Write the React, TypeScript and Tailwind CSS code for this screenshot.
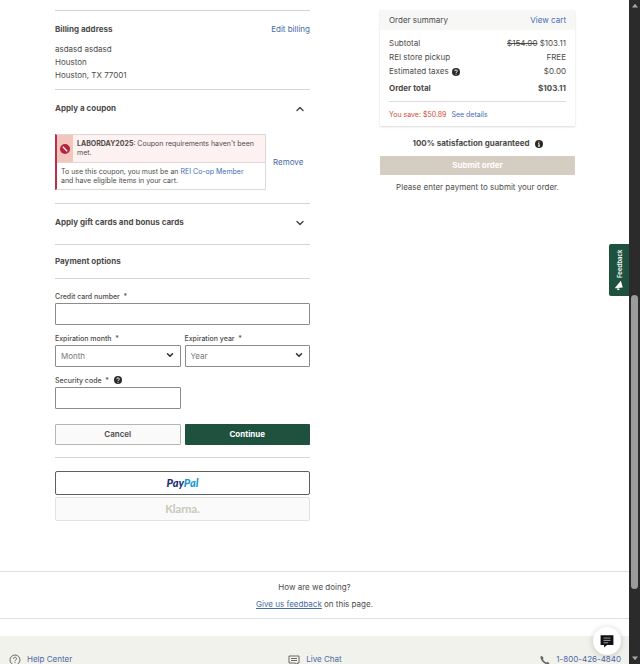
import { useState } from "react"
import type { ReactNode } from "react"
import { ChevronDown, ChevronUp } from "lucide-react"

const years = ["2025", "2026", "2027", "2028", "2029", "2030"]
const months = ["01", "02", "03", "04", "05", "06", "07", "08", "09", "10", "11", "12"]

const BadgeIcon = ({ sign }: { sign: "?" | "i" }) => (
  <svg viewBox="0 0 16 16" className="size-2 shrink-0" fill="none" stroke="#fff" strokeWidth="2">
    <circle cx="8" cy="8" r="8" fill="#2b2a28" stroke="none" />
    {sign === "?" ? <path d="M5.5 6.3a2.5 2.5 0 1 1 3.6 2.2c-.8.4-1.1.7-1.1 1.5M8 11.6v1.8" /> : <path d="M8 3v2M6.3 7.3H8v4.5M6 12.2h4" />}
  </svg>
)

const Field = ({ id, label, help, children }: { id: string, label: string, help?: boolean, children: ReactNode }) => (
  <div>
    <div className="flex items-center gap-[5px] h-3 mb-px">
      <label htmlFor={id} className="text-[7px] font-medium">{label} &nbsp;*</label>
      {help && <button type="button" aria-label="About the security code"><BadgeIcon sign="?" /></button>}
    </div>
    {children}
  </div>
)

const Select = ({ id, placeholder, options }: { id: string, placeholder: string, options: Array<string> }) => (
  <div className="relative">
    <select id={id} className="block w-full h-[22px] px-[5px] pt-px appearance-none bg-white border border-[#8b8b89] rounded-[1px] text-[#777]">
      <option value="">{placeholder}</option>
      {options.map((o) => <option key={o} value={o}>{o}</option>)}
    </select>
    <ChevronDown className="absolute right-1.5 top-[5px] size-2.5 text-[#2b2a28] pointer-events-none" strokeWidth={3.5} />
  </div>
)

const Payment = () => {
  const [couponOpen, setCouponOpen] = useState(true)

  return (
    <div>
      {/* Billing */}
      <section className="border-t border-[#d4d4d2] pt-3 pb-[7px]">
        <div className="flex justify-between">
          <h2 className="font-bold">Billing address</h2>
          <a href="#billing" className="text-[#456ca6]">Edit billing</a>
        </div>
        <address className="not-italic mt-[7px]">
          asdasd asdasd<br />Houston<br />Houston, TX 77001
        </address>
      </section>

      {/* Coupon */}
      <section className="border-t border-[#d4d4d2] pt-3 pb-[13px]">
        <h2 className="font-bold">
          <button type="button" className="flex w-full items-center justify-between pr-1" onClick={() => setCouponOpen(!couponOpen)}>
            Apply a coupon
            {couponOpen ? <ChevronUp className="size-3" strokeWidth={3} /> : <ChevronDown className="size-3" strokeWidth={3} />}
          </button>
        </h2>
        {couponOpen && (
          <div className="flex items-center gap-[7px] mt-[19px]">
            <div className="w-[211px] border border-[#dcd8d6] border-l-2 border-l-[#b5324a] text-[7px] leading-[9px]">
              <div className="flex bg-[#fdf1f1] border-b border-[#e6d5d4]">
                <div className="flex items-center justify-center w-4 shrink-0 bg-[#f2c6be]">
                  <svg viewBox="0 0 16 16" className="size-2.5">
                    <circle cx="8" cy="8" r="8" fill="#b5243c" />
                    <path d="M4.5 4.5l7 7" stroke="#fff" strokeWidth="2" />
                  </svg>
                </div>
                <p className="p-1 pb-[5px] whitespace-nowrap"><b className="font-bold">LABORDAY2025</b>: Coupon requirements haven't been<br />met.</p>
              </div>
              <p className="p-1 whitespace-nowrap">
                To use this coupon, you must be an <a href="#member" className="text-[#3f6db5]">REI Co-op Member</a><br />and have eligible items in your cart.
              </p>
            </div>
            <button type="button" className="text-[#456ca6]">Remove</button>
          </div>
        )}
      </section>

      {/* Gift cards */}
      <section className="border-t border-[#d4d4d2] pt-3 pb-[15px]">
        <h2 className="font-bold">
          <button type="button" className="flex w-full items-center justify-between pr-1">
            Apply gift cards and bonus cards
            <ChevronDown className="size-3" strokeWidth={3} />
          </button>
        </h2>
      </section>

      {/* Payment */}
      <section className="border-t border-[#d4d4d2]">
        <h2 className="font-bold py-2.5 border-b border-[#d4d4d2]">Payment options</h2>
        <form className="pt-[11px] grid gap-[7px]" onSubmit={(e) => e.preventDefault()}>
          <Field id="card" label="Credit card number">
            <input id="card" type="text" className="block w-full h-[22px] px-[5px] border border-[#8b8b89] rounded-[1px]" />
          </Field>
          <div className="grid grid-cols-2 gap-1">
            <Field id="month" label="Expiration month">
              <Select id="month" placeholder="Month" options={months} />
            </Field>
            <Field id="year" label="Expiration year">
              <Select id="year" placeholder="Year" options={years} />
            </Field>
          </div>
          <div className="grid grid-cols-2 gap-1">
            <Field id="code" label="Security code" help>
              <input id="code" type="text" className="block w-full h-[22px] px-[5px] border border-[#8b8b89] rounded-[1px]" />
            </Field>
          </div>
          <div className="grid grid-cols-2 gap-1 mt-2">
            <button type="button" className="h-[21px] border border-[#b5b5b2] rounded-[1px] bg-[#fafafa] font-semibold">Cancel</button>
            <button type="submit" className="h-[21px] rounded-[1px] bg-[#1f513f] text-white font-bold">Continue</button>
          </div>
        </form>

        <div className="grid gap-0.5 mt-3 pt-[13px] border-t border-[#d4d4d2] font-[Lato,sans-serif] text-[11px] font-black">
          <button type="button" className="h-6 pb-0.5 border border-[#5f5f5d] rounded-[2px] italic text-[#1c2f78]">Pay<span className="text-[#1a98d5]">Pal</span></button>
          <button type="button" disabled className="h-6 pb-0.5 border border-[#e2e2df] rounded-[2px] bg-[#fafafa] text-[#cccabb]">Klarna.</button>
        </div>
      </section>
    </div>
  )
}

const Summary = () => (
  <aside className="text-center">
    <div className="text-left shadow-[0_1px_2px_#00000026]">
      <div className="flex items-center justify-between h-5 px-[9px] bg-[#f7f7f6]">
        <h2>Order summary</h2>
        <a href="#cart" className="text-[#3f6db5]">View cart</a>
      </div>
      <div className="px-[9px] pt-[7px] pb-[5px]">
        <dl className="grid grid-cols-[1fr_auto] gap-y-px">
          <dt>Subtotal</dt>
          <dd className="text-right"><s>$154.00</s> $103.11</dd>
          <dt>REI store pickup</dt>
          <dd className="text-right">FREE</dd>
          <dt className="flex items-center gap-[3px]">Estimated taxes <BadgeIcon sign="?" /></dt>
          <dd className="text-right">$0.00</dd>
          <dt className="pt-[3px] font-bold">Order total</dt>
          <dd className="pt-[3px] text-right font-bold">$103.11</dd>
        </dl>
        <p className="flex gap-[5px] mt-1.5 pt-1.5 border-t border-[#dcdcda] text-[7px] text-[#cf4a35]">
          You save: $50.89 <a href="#details" className="text-[#3f6db5]">See details</a>
        </p>
      </div>
    </div>
    <p className="flex items-center justify-center gap-[5px] mt-[11px] font-bold">100% satisfaction guaranteed <BadgeIcon sign="i" /></p>
    <button type="button" disabled className="block w-full h-[19px] mt-1.5 rounded-[1px] bg-[#d6cdc2] text-white font-bold">Submit order</button>
    <p className="mt-1.5">Please enter payment to submit your order.</p>
  </aside>
)

export default function App() {
  return (
    <div className="flex h-screen overflow-hidden bg-white font-[Inter,sans-serif] text-[8px] leading-[13px] text-[#4d4c4a]">
      <div className="relative flex-1 flex flex-col min-w-0">
        <main className="grid grid-cols-[17fr_13fr] gap-[70px] pt-2.5 pl-[55px] pr-[54px] flex-1">
          <Payment />
          <Summary />
        </main>

        <div className="border-y border-[#dbe0e2] text-center pt-[9px] pb-[7px] mb-[17px] grid gap-1">
          <p>How are we doing?</p>
          <p><a href="#feedback" className="underline text-[#456ca6]">Give us feedback</a> on this page.</p>
        </div>

        <footer className="grid grid-cols-3 h-7 shrink-0 pt-[17px] pl-[9px] pr-2 bg-[#f2f2ec] text-[#4c68a6]">
          <a href="#help" className="flex items-center gap-1.5 h-[13px]">
            <svg viewBox="0 0 24 24" className="size-3" fill="none" stroke="#6b6963" strokeWidth="2">
              <circle cx="12" cy="12" r="10" />
              <path d="M9 9.5a3 3 0 1 1 4.3 2.7c-1 .5-1.3 1-1.3 2M12 16v2" />
            </svg>
            Help Center
          </a>
          <a href="#chat" className="flex items-center justify-center gap-1.5 h-[13px]">
            <svg viewBox="0 0 24 24" className="size-3" fill="none" stroke="#6b6963" strokeWidth="2">
              <path d="M2 4h20v14h-3v3l-5-3H2zM6 9h12M6 13h12" />
            </svg>
            Live Chat
          </a>
          <a href="tel:18004264840" className="flex items-center justify-end gap-1.5 h-[13px]">
            <svg viewBox="0 0 24 24" className="size-2.5" fill="#6b6963">
              <path d="M4 2L1 4c0 9 9 18 18 19l4-3-5-4-3 2c-4-2-7-5-8-9l2-2z" />
            </svg>
            1-800-426-4840
          </a>
        </footer>

        {/* Feedback tab and chat button float over the page */}
        <button type="button" className="absolute right-0 top-[244px] flex items-center justify-center gap-0.5 w-5 h-[52px] rounded-r-[2px] bg-[#1f513f] text-white text-[6px] font-semibold [writing-mode:vertical-rl] rotate-180">
          <svg viewBox="0 0 16 16" className="size-2.5 rotate-180 shrink-0" fill="#fff">
            <path d="M1 13L11 1l3 11zM4 14l4-1 1 3H6z" />
          </svg>
          Feedback
        </button>
        <button type="button" aria-label="Chat" className="absolute right-2 bottom-[9px] flex items-center justify-center size-7 rounded-full bg-white shadow-[0_1px_6px_#00000033]">
          <svg viewBox="0 0 24 24" className="size-3.5" fill="#111">
            <path d="M1 2h22v17H12l-5 4v-4H1z" />
            <path d="M6 7h12M6 11h12M6 15h8" stroke="#fff" strokeWidth="1" />
          </svg>
        </button>
      </div>

      {/* Scroll bar */}
      <div className="w-[11px] shrink-0 flex flex-col items-center justify-between bg-[#2b2b2b]">
        <svg viewBox="0 0 8 8" className="w-1.5 h-3" fill="#a8a8a8"><path d="M0 6l4-5 4 5z" /></svg>
        <div className="w-[7px] h-[294px] mt-[220px] rounded-full bg-[#9b9b9b]"></div>
        <svg viewBox="0 0 8 8" className="w-1.5 h-3" fill="#a8a8a8"><path d="M0 2l4 5 4-5z" /></svg>
      </div>
    </div>
  )
}
